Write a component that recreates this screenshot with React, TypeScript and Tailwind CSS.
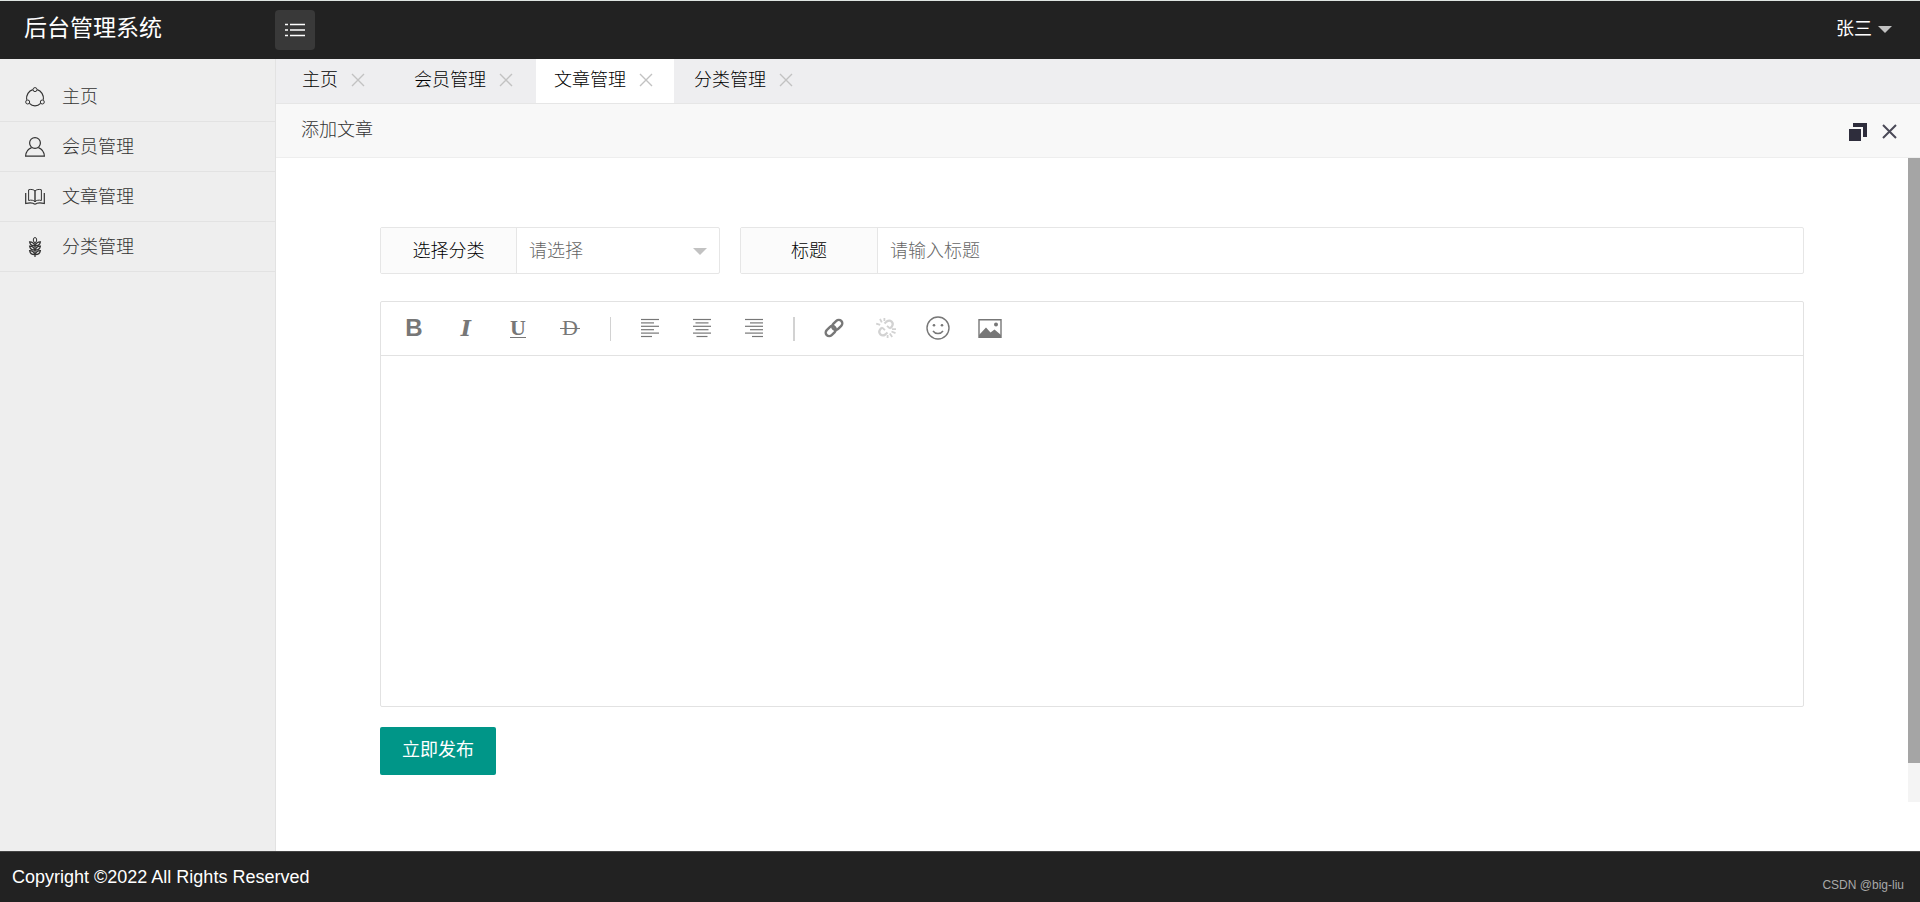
import { useState, type ReactNode } from 'react';
import { clsx } from 'clsx';

const menuItems = [
  { label: '主页', icon: <ShareIcon /> },
  { label: '会员管理', icon: <UserIcon /> },
  { label: '文章管理', icon: <BookIcon /> },
  { label: '分类管理', icon: <WheatIcon /> },
];

function Svg({ children, className = 'w-5 h-5', viewBox = '0 0 20 20' }: { children: ReactNode; className?: string; viewBox?: string }) {
  return (
    <svg viewBox={viewBox} className={className} fill="none" stroke="currentColor" aria-hidden="true">
      {children}
    </svg>
  );
}

function ShareIcon() {
  return (
    <Svg>
      <circle cx="10" cy="2.6" r="2" />
      <circle cx="2.7" cy="15" r="2" />
      <circle cx="17.3" cy="15" r="2" />
      <path d="M7.8 2.6C3.8 3.8 1 8 1.6 12.8M12.2 2.6c4 1.2 6.8 5.4 6.2 10.2M4.4 16.4c3.2 3.2 8 3.2 11.2 0" strokeWidth="1.2" />
    </Svg>
  );
}

function UserIcon() {
  return (
    <Svg>
      <circle cx="10" cy="6" r="5.4" strokeWidth="1.2" />
      <path d="M6.6 10.6C3 12 .8 15 .6 19.2h18.8c-.2-4.2-2.4-7.2-6-8.6" strokeWidth="1.2" />
    </Svg>
  );
}

function BookIcon() {
  return (
    <Svg>
      <path d="M10 4C9 2.5 5.5 2 3.6 2.8V13.5c2.5-.8 5.2-.3 6.400 1.300 1.200-1.600 3.900-2.100 6.400-1.300V2.800C14.500 2 11 2.500 10 4z" />
      <path d="M10 4v11" strokeWidth="1.4" />
      <path d="M.7 6v10.500c3-.8 5.800-.8 7.300-.2.600 1 3.400 1 4 0 1.500-.6 4.300-.6 7.300.2V6" strokeWidth="1.2" />
    </Svg>
  );
}

function WheatIcon() {
  return (
    <Svg>
      <path d="M10 5v15" strokeWidth="1.2" />
      <ellipse cx="10" cy="3" rx="1.7" ry="2.5" />
      <path d="M9.600 8.800C6.800 8.800 5 7.400 4.600 4.800c2.800.1 4.700 1.400 5 4zM10.400 8.800c2.800 0 4.600-1.400 5-4-2.800.1-4.700 1.400-5 4z" strokeWidth="1.2" />
      <path d="M9.600 13.200c-2.800 0-4.600-1.400-5-4 2.800.1 4.700 1.400 5 4zM10.400 13.200c2.800 0 4.600-1.400 5-4-2.800.1-4.700 1.400-5 4z" strokeWidth="1.2" />
      <path d="M9.600 17.600c-2.800 0-4.600-1.400-5-4 2.800.1 4.700 1.400 5 4zM10.400 17.600c2.800 0 4.600-1.400 5-4-2.800.1-4.700 1.400-5 4z" strokeWidth="1.2" />
    </Svg>
  );
}

function CloseIcon({ className }: { className?: string }) {
  return (
    <Svg className={className} viewBox="0 0 16 16">
      <path d="M2 2l12 12M14 2L2 14" strokeWidth="1.4" />
    </Svg>
  );
}

// Six rules, every second one shorter
function AlignIcon({ align }: { align: 'left' | 'center' | 'right' }) {
  const widths = [18, 13, 18, 13, 18, 11];
  const shift = { left: 0, center: 0.5, right: 1 }[align];
  return (
    <Svg viewBox="0 0 18 20" className="w-[18px] h-5">
      {widths.map((w, i) => {
        const x = (18 - w) * shift;
        const y = 1.5 + i * 3.4;
        return <path key={i} d={`M${x} ${y}h${w}`} strokeWidth="1.2" />;
      })}
    </Svg>
  );
}

function LinkIcon() {
  return (
    <Svg>
      <g transform="rotate(-45 10 10)" strokeWidth="2.4">
        <rect x="-.2" y="6.4" width="11.4" height="7" rx="3.5" />
        <rect x="8.800" y="6.6" width="11.4" height="7" rx="3.5" />
      </g>
    </Svg>
  );
}

function UnlinkIcon() {
  return (
    <Svg>
      <path d="M8.500 5.500l2.200-2c3.600-2.700 7.800 1.400 5.200 5L14 10.500M11.500 14.500l-2.200 2c-3.600 2.700-7.800-1.400-5.200-5L6 9.500" strokeWidth="2.2" />
      <path d="M6 9.500l3 2.700M11 7.800l3 2.700M4 1l1.800 3.400M8.400 0v3M.2 5.500l4 1.400M15.500 13.500l4 1.600M13.800 15.500l2.400 3.600M11.600 17v3M16 11.200h4" strokeWidth="1.8" />
    </Svg>
  );
}

function SmileIcon() {
  return (
    <Svg className="w-6 h-6" viewBox="0 0 24 24">
      <circle cx="12" cy="12" r="11" strokeWidth="1.4" />
      <path d="M7 15c2.5 3.4 7.5 3.4 10 0" strokeWidth="1.5" />
      <circle cx="8" cy="9.3" r="1.3" fill="currentColor" stroke="none" />
      <circle cx="16" cy="9.3" r="1.3" fill="currentColor" stroke="none" />
    </Svg>
  );
}

function ImageIcon() {
  return (
    <Svg className="w-6 h-6" viewBox="0 0 24 24">
      <path d="M1 3.7h22v17.6H1z" strokeWidth="1.4" />
      <path d="M1 19l7-7.5 4.5 5 4-3L23 19v2.5H1z" fill="currentColor" stroke="none" />
      <circle cx="18" cy="8.5" r="2" fill="currentColor" stroke="none" />
    </Svg>
  );
}

function ToolButton({ label, disabled, children }: { label: string; disabled?: boolean; children: ReactNode }) {
  return (
    <button
      type="button"
      aria-label={label}
      disabled={disabled}
      className="w-[52px] h-full pb-px flex items-center justify-center text-[#777] hover:text-black disabled:text-[#d2d2d2]"
    >
      {children}
    </button>
  );
}

function Separator({ className }: { className: string }) {
  return (
    <span className="w-7 flex justify-center">
      <span className={clsx('h-6', className)} />
    </span>
  );
}

function Header() {
  return (
    <header className="h-[59px] shrink-0 flex items-center bg-[#222] border-t border-[#dfe5e2] text-white">
      <h1 className="w-[275px] pl-6 pb-1 text-[23px] font-normal">后台管理系统</h1>
      <button type="button" aria-label="收起菜单" className="w-10 h-10 flex items-center justify-center rounded-sm bg-[#393939]">
        <Svg>
          <path d="M0 4.5h3M5 4.5h15M0 10h3M5 10h15M0 15.5h3M5 15.5h15" strokeWidth="1.3" />
        </Svg>
      </button>
      <button type="button" className="ml-auto mr-7 pb-0.5 flex items-center gap-1.5 text-lg font-normal">
        张三
        <span className="border-x-7 border-t-7 border-x-transparent border-t-[#c2c2c2]" />
      </button>
    </header>
  );
}

function Sidebar() {
  return (
    <nav className="w-[276px] shrink-0 pt-[13px] bg-[#eee] border-r border-[#e2e2e2]">
      <ul>
        {menuItems.map((item) => (
          <li key={item.label}>
            <a href="#" className="flex items-center gap-[17px] h-[50px] pl-[25px] border-b border-[#e2e2e2] text-lg text-[#333]">
              {item.icon}
              {item.label}
            </a>
          </li>
        ))}
      </ul>
    </nav>
  );
}

function Tabs() {
  const [active, setActive] = useState('文章管理');

  return (
    <div className="flex gap-0.5 h-[45px] pl-2 bg-[#eeeef0] border-b border-[#e6e6e6]">
      {menuItems.map(({ label }) => (
        <div
          key={label}
          className={clsx('flex items-center gap-3 min-w-[110px] pl-[18px] pr-5 pb-0.5', active === label && 'bg-white')}
        >
          <button type="button" onClick={() => setActive(label)} className="text-lg text-black">
            {label}
          </button>
          <button type="button" aria-label={`关闭${label}`} className="text-[#c2c2c2]">
            <CloseIcon className="w-4 h-4" />
          </button>
        </div>
      ))}
    </div>
  );
}

function Editor() {
  return (
    <div className="mt-[27px] border border-[#e2e2e2] rounded-xs">
      <div className="flex items-center h-[54px] px-[7px] border-b border-[#e2e2e2]">
        <ToolButton label="加粗">
          <span className="font-['Liberation_Sans',sans-serif] font-bold text-2xl leading-6">B</span>
        </ToolButton>
        <ToolButton label="斜体">
          <i className="font-['DejaVu_Serif',serif] font-bold text-[22px] leading-6">I</i>
        </ToolButton>
        <ToolButton label="下划线">
          <span className="font-['Liberation_Serif',serif] font-bold text-[22px] leading-[18px] border-b border-[#777]">U</span>
        </ToolButton>
        <ToolButton label="删除线">
          <span className="relative px-0.5 font-['Liberation_Serif',serif] font-normal text-[22px] leading-6">
            D
            <span className="absolute inset-x-0 top-3 border-t border-[#777]" />
          </span>
        </ToolButton>
        <Separator className="w-px bg-[#d2d2d2]" />
        <ToolButton label="左对齐"><AlignIcon align="left" /></ToolButton>
        <ToolButton label="居中对齐"><AlignIcon align="center" /></ToolButton>
        <ToolButton label="右对齐"><AlignIcon align="right" /></ToolButton>
        <Separator className="w-0.5 bg-[#d2d2d2]" />
        <ToolButton label="插入链接"><LinkIcon /></ToolButton>
        <ToolButton label="清除链接" disabled><UnlinkIcon /></ToolButton>
        <ToolButton label="表情"><SmileIcon /></ToolButton>
        <ToolButton label="图片"><ImageIcon /></ToolButton>
      </div>
      <textarea aria-label="文章内容" className="block w-full h-[350px] p-3 text-lg resize-none outline-none" />
    </div>
  );
}

function ArticleForm() {
  return (
    <form className="flex-1 px-[104px] pt-[69px] pb-[27px]" onSubmit={(e) => e.preventDefault()}>
      <div className="flex gap-5 text-lg">
        <div className="flex w-[340px] h-[47px] border border-[#e6e6e6] rounded-xs">
          <label htmlFor="category" className="w-[136px] flex items-center justify-center bg-[#fbfbfb] border-r border-[#e6e6e6] text-black">
            选择分类
          </label>
          <div className="relative flex-1">
            <select id="category" className="w-full h-full pl-3 appearance-none bg-transparent text-[#666] outline-none">
              <option>请选择</option>
            </select>
            <span className="absolute right-3 top-5 border-x-7 border-t-7 border-x-transparent border-t-[#c2c2c2] pointer-events-none" />
          </div>
        </div>
        <div className="flex flex-1 h-[47px] border border-[#e6e6e6] rounded-xs">
          <label htmlFor="title" className="w-[137px] flex items-center justify-center bg-[#fbfbfb] border-r border-[#e6e6e6] text-black">
            标题
          </label>
          <input id="title" type="text" placeholder="请输入标题" className="flex-1 px-3 placeholder:text-[#666] outline-none" />
        </div>
      </div>
      <Editor />
      <button type="submit" className="mt-5 h-12 px-[22px] pb-0.5 rounded-xs bg-[#009688] text-lg font-normal text-white">
        立即发布
      </button>
    </form>
  );
}

export default function App() {
  return (
    <div className="min-h-screen flex flex-col bg-white font-['Liberation_Sans','Noto_Sans_CJK_SC',sans-serif] font-light">
      <Header />
      <div className="flex flex-1">
        <Sidebar />
        <main className="flex-1 pb-12">
          <Tabs />
          <div className="flex items-center h-[54px] pl-[25px] pr-[22px] bg-[#f8f8f8] border-b border-[#eee]">
            <h2 className="pb-0.5 text-lg text-[#333]">添加文章</h2>
            <button type="button" aria-label="还原" className="ml-auto pt-0.5 text-[#2e2d3c]">
              <Svg className="w-[18px] h-[18px]" viewBox="0 0 18 18">
                <path d="M0 6h12v12H0zM4 0h14v14h-4V4H4z" fill="currentColor" stroke="none" />
              </Svg>
            </button>
            <button type="button" aria-label="关闭" className="ml-3.5 pt-0.5 text-[#4a4957]">
              <Svg className="w-[17px] h-[17px]" viewBox="0 0 17 17">
                <path d="M2 2l13 13M15 2L2 15" strokeWidth="2" />
              </Svg>
            </button>
          </div>
          <div className="flex">
            <ArticleForm />
            <div className="w-3 bg-[#f4f4f4]">
              <div className="h-[94%] bg-[#a5a5a5]" />
            </div>
          </div>
        </main>
      </div>
      <footer className="flex items-center justify-between h-[51px] shrink-0 pl-3 pr-4 bg-[#222] border-t border-[#444]">
        <p className="text-lg text-white">Copyright ©2022 All Rights Reserved</p>
        <span className="pt-4 text-xs text-[#a9a9a9]">CSDN @big-liu</span>
      </footer>
    </div>
  );
}
